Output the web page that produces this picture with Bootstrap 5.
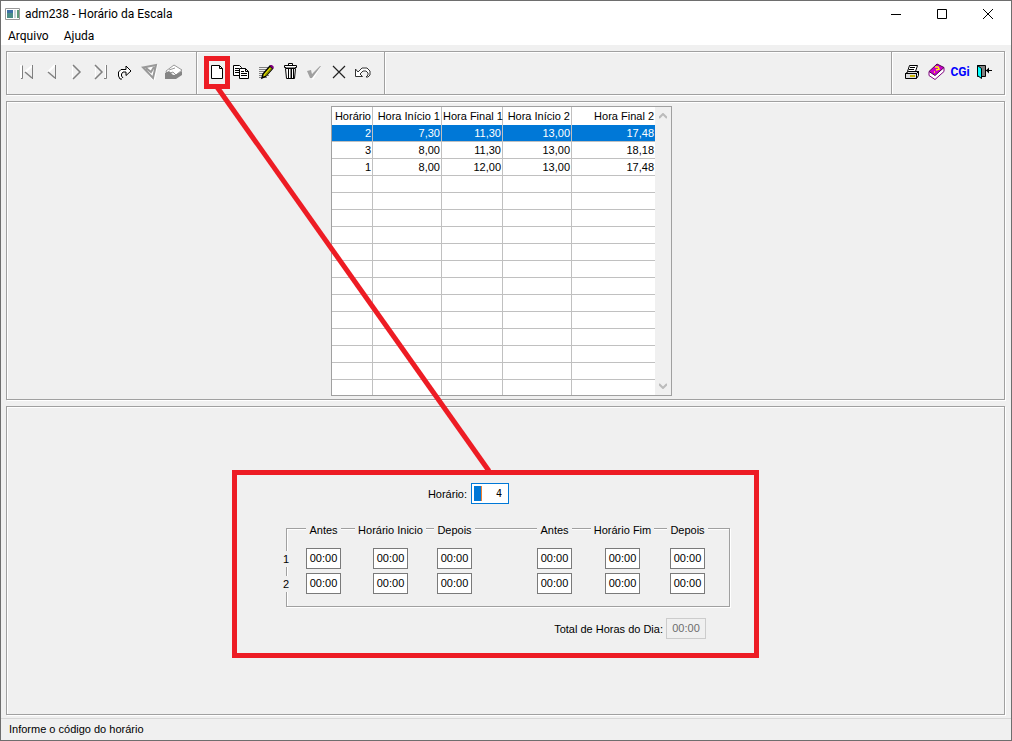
<!DOCTYPE html>
<html lang="pt-BR">
<head>
<meta charset="utf-8">
<meta name="viewport" content="width=device-width, initial-scale=1">
<title>adm238 - Horário da Escala</title>
<link href="https://cdn.jsdelivr.net/npm/bootstrap@5.3.0/dist/css/bootstrap.min.css" rel="stylesheet">
<style>
  :root { --face: #f0f0f0; --edge: #a0a0a0; --blue: #0078d7; --red: #ed1c24; }
  body { font-family: "Liberation Sans", Arial, sans-serif; font-size: 11px; line-height: 16px; color: #000; background: var(--face); }
  .window { border: 1px solid #6e6e6e; }
  .caption, .menus { font-family: Roboto, "Segoe UI", sans-serif; font-size: 12px; background: #fff; }
  .caption { height: 25px; }
  .caption h1 { font-size: 12px; line-height: 24px; font-weight: 400; padding-left: 5px; }
  .caption button { width: 46px; height: 25px; }
  .menus { height: 19px; line-height: 20px; padding-left: 7px; gap: 15px; }
  .menus a { color: #000; text-decoration: none; }
  button { border: 0; background: transparent; padding: 0; color: #000; }
  svg { display: block; }
  main { padding: 0 6px 0 5px; }
  .etched { border: 1px solid var(--edge); box-shadow: inset 1px 1px #fff, 1px 1px #fff; }
  .tools { height: 44px; margin-top: 6px; }
  .tools > div { padding: 0 8px 3px 8px; }
  .tools .wide { width: 190px; padding-right: 10px; }
  .tools .mid { width: 188px; padding-left: 8px; padding-right: 9px; }
  .tools .split { border-right: 1px solid var(--edge); box-shadow: 1px 0 #fff; }
  .tools .split-start { border-left: 1px solid var(--edge); box-shadow: inset 1px 0 #fff; }
  .tools button { width: 24px; height: 24px; display: flex; align-items: center; justify-content: center; }
  .tools .cgi { font: 700 12px/16px Roboto, "Liberation Sans", sans-serif; color: #00f; }
  .call-out { inset: -4px -1px -5px; border: 5px solid var(--red); }
  .browse { margin-top: 6px; padding: 4px 8px 3px 0; }
  .listing { border: 1px solid var(--edge); background: #fff; }
  .listing table { width: 323px; table-layout: fixed; border-collapse: separate; border-spacing: 0; }
  .listing th { font-weight: 400; height: 18px; line-height: 17px; }
  .listing td { height: 17px; line-height: 16px; border-bottom: 1px solid #c0c0c0; }
  .listing tr > * { padding: 0 1px; text-align: right; white-space: nowrap; border-right: 1px solid #c0c0c0; }
  .listing tr > :last-child { border-right: 0; }
  .listing tbody tr:last-child td { height: 15px; border-bottom: 0; }
  .listing .picked td { background: var(--blue); color: #fff; }
  .col-code { width: 41px; }
  .col-start { width: 69px; }
  .col-end { width: 61px; }
  .track { width: 16px; background: var(--face); padding: 6px 0; }
  .editor { margin-top: 6px; padding: 63px 20px 0 0; }
  .framed { width: 527px; border: 5px solid var(--red); padding: 8px 22px 14px 49px; }
  .framed input { height: 21px; border: 1px solid #7a7a7a; background: #fff; padding: 0 0 1px; text-align: center; border-radius: 0; color: #000; outline: 0; }
  .framed .code { width: 38px; border-color: var(--blue); padding-right: 6px; text-align: right; font-family: "DejaVu Sans Mono", monospace; font-size: 10px;
    background: linear-gradient(90deg, var(--blue) 7px, #f08030 7px) 2px 2px / 8px 15px no-repeat #fff; }
  .lead-field { padding-right: 223px; }
  .hours { margin-top: 24px; height: 79px; width: 444px; }
  .hours .cells { display: grid; grid-template-columns: 8px 67px 67px 61px 36px 67px 69px 61px; grid-template-rows: 28px 21px 21px; row-gap: 4px; margin: -13px 0 0 -5px; justify-items: center; align-items: center; }
  .cells span, .cells label { background: var(--face); padding: 0 3px; white-space: nowrap; }
  .cells .no { padding: 0; }
  .cells input { width: 35px; }
  .total { margin-top: 11px; padding-right: 26px; }
  .total label { padding-right: 3px; }
  .framed .total input { width: 40px; border-color: #ccc; background: var(--face); color: #6d6d6d; }
  .status { margin-top: 3px; border-top: 1px solid #d7d7d7; height: 22px; padding: 2px 8px; }
  .pointer { pointer-events: none; z-index: 5; }
</style>
</head>
<body>
<div class="window position-relative d-flex flex-column min-vh-100">
  <header class="caption d-flex align-items-center">
    <svg class="ms-1" width="15" height="12" viewBox="0 0 15 12"><path fill="#fff" stroke="#999" d="M.5.5h14v11H.5z"/><path fill="#4a8c86" d="M2 2h6v8H2z"/><path fill="#3d6fa5" d="M2 2h6v3H2z"/><path fill="#c8d4d8" d="M9 2h2v8H9z"/><path fill="#5d9a78" d="M12 2h2v8h-2z"/></svg>
    <h1 class="mb-0 me-auto">adm238 - Horário da Escala</h1>
    <button type="button" aria-label="Minimizar"><svg class="mx-auto" width="12" height="12"><path stroke="#000" d="M1 6.500h10"/></svg></button>
    <button type="button" aria-label="Maximizar"><svg class="mx-auto" width="12" height="12"><path fill="none" stroke="#000" d="M1.500 1.500h9v9h-9z"/></svg></button>
    <button type="button" aria-label="Fechar"><svg class="mx-auto" width="12" height="12"><path stroke="#000" d="M1 1l10 10M11 1L1 11"/></svg></button>
  </header>
  <nav class="menus d-flex"><a href="#">Arquivo</a><a href="#">Ajuda</a></nav>

  <main class="d-flex flex-column flex-grow-1">
    <div class="tools etched d-flex">
      <div class="wide split d-flex align-items-center justify-content-between">
        <button type="button" aria-label="Primeiro"><svg width="16" height="16" fill="none"><path stroke="#fff" stroke-width="2" d="M2 1v13M13 2L6 8"/><path stroke="#808080" d="M2 14.500h1.500v-13M13.500 1v14"/><path stroke="#808080" stroke-width="1.500" d="M13 14L6 8"/></svg></button>
        <button type="button" aria-label="Anterior"><svg width="16" height="16" fill="none"><path stroke="#fff" stroke-width="2" d="M11 1L4 8"/><path stroke="#808080" d="M11.500 1v14"/><path stroke="#808080" stroke-width="1.500" d="M11 14L4 8"/></svg></button>
        <button type="button" aria-label="Próximo"><svg width="16" height="16" fill="none"><path stroke="#fff" d="M4.500 15V1M5 15l7-7"/><path stroke="#808080" d="M5 1l7 7-7 7" stroke-width="1.500"/></svg></button>
        <button type="button" aria-label="Último"><svg width="16" height="16" fill="none"><path stroke="#fff" d="M2.500 15V1M12.500 1v13"/><path stroke="#808080" d="M2 1l7 7-7 7" stroke-width="1.500"/><path stroke="#808080" d="M13.500 1v13.500H11"/></svg></button>
        <button type="button" aria-label="Ir para"><svg width="16" height="16"><path fill="#fff" stroke="#000" d="M5 15H3L1.500 12V8L4 5.500h5V2l5 5-5 4.500V8H6L4.500 10v2L6 14"/></svg></button>
        <button type="button" aria-label="Filtrar"><svg width="18" height="18"><path fill="#fff" d="M2 5L17 1l-3 16h-3z"/><path fill="none" stroke="#999" stroke-width="2" d="M2 4.500L15 2l-3 13zM5 5l5 4 3-5"/></svg></button>
        <button type="button" aria-label="Catálogo"><svg width="18" height="18"><path fill="#fff" stroke="#999" d="M1 8l8-6 8 5-6 5-3-3-6 2z"/><path fill="#858585" d="M0 10l4-2 4 4h2l7-4v4l-6 4H0z"/><path stroke="#999" d="M4 7l6-2"/></svg></button>
      </div>
      <div class="mid split d-flex align-items-center justify-content-between">
        <button class="position-relative" type="button" aria-label="Novo"><svg width="16" height="16"><path fill="#fff" stroke="#000" d="M2.500 1.500h8l3 3v10h-11zM10.500 1.500v3h3"/></svg><i class="call-out position-absolute"></i></button>
        <button type="button" aria-label="Copiar"><svg width="16" height="16" fill="#fff" stroke="#000"><path d="M.5 1.500h6l2 2v8h-8zM2 4.500h4M2 6.500h5M2 8.500h5"/><path d="M6.500 4.500h6l3 3v7h-9zM12.500 4.500v3h3M8 7.500h3M8 9.500h6M8 11.500h6"/></svg></button>
        <button type="button" aria-label="Editar"><svg width="16" height="16"><path stroke="#808080" d="M1 3.500h9M1 5.500h8M1 7.500h6M1 9.500h5M1 11.500h10M1 13.500h8"/><path fill="#dd0" stroke="#000" stroke-width="1.500" d="M4 14l1-4 7-8 2.500 2.500-7 8z"/><path fill="#800080" d="M12 1h2l2 2-1 2-3-3z"/><path fill="#808000" d="M7 11l6-7 1 1-6 7z"/></svg></button>
        <button type="button" aria-label="Excluir"><svg width="16" height="17"><path fill="#fff" stroke="#000" d="M6.500 2.500v-2h4v2M2.500 2.500h12v2h-12zM3.500 5.500l1 10h8l1-10z"/><path stroke="#000" d="M6.500 6v9M9.500 6v9M11.500 6v9"/><path stroke="#888" d="M8.500 6v9M4 4.500h9"/></svg></button>
        <button type="button" aria-label="Confirmar"><svg width="16" height="16"><path fill="#fff" d="M2 8l3-1 2 3 8-8-1 2-7 12z"/><path fill="#a0a0a0" d="M1 7l4-1 1 4 8-8h1L6 14H4z"/></svg></button>
        <button type="button" aria-label="Cancelar"><svg width="16" height="16"><path stroke="#222" d="M2 2l12 12M14 2L2 14" stroke-width="1.200"/></svg></button>
        <button type="button" aria-label="Desfazer"><svg width="17" height="16" fill="none"><path fill="#fff" stroke="#333" d="M1.500 5v7.500h7L6 10l3-3h3l2 2v2l-2 2h2l2-2V7l-3-3H8L4 8z"/></svg></button>
      </div>
      <div class="split-start d-flex align-items-center ms-auto">
        <button type="button" aria-label="Imprimir"><svg width="16" height="16"><path fill="#fff" stroke="#000" d="M5.500 1.500h8l-2 6h-8z"/><path stroke="#000" d="M6 3.500h5M5 5.500h5"/><path fill="#ddd" stroke="#000" d="M1.500 9.500l3-2h10l-2 2zM1.500 9.500h11v5h-11zM12.500 9.500l2-2v4l-2 3"/><path stroke="#c8b400" stroke-width="2" d="M6 12h5"/></svg></button>
        <button type="button" aria-label="Manual"><svg width="17" height="17"><path fill="#fff" stroke="#800080" d="M1 8.500v4l6 4 9-8v-4"/><path fill="#c0c" stroke="#505" d="M1 8.500L9 1l7 3.500-9 8z"/><path fill="none" stroke="#ff0" stroke-width="1.500" d="M7 4l3 0 1 2-3 1M6 9h1"/></svg></button>
        <button class="cgi" type="button">CGi</button>
        <button type="button" aria-label="Sair"><svg width="16" height="16"><path fill="#808080" stroke="#000" d="M1.500 1.500h8v11h-8z"/><path fill="#0ff" stroke="#000" d="M1.500 1.500l4 3v10l-4-3z"/><path stroke="#000" d="M10 6.500h6"/><path d="M10 6.500l3-3v6z"/></svg></button>
      </div>
    </div>

    <section class="browse etched d-flex justify-content-center">
      <div class="listing d-flex">
        <table>
          <colgroup><col class="col-code"><col class="col-start"><col class="col-end"><col class="col-start"><col></colgroup>
          <thead><tr><th>Horário</th><th>Hora Início 1</th><th>Hora Final 1</th><th>Hora Início 2</th><th>Hora Final 2</th></tr></thead>
          <tbody>
            <tr class="picked"><td>2</td><td>7,30</td><td>11,30</td><td>13,00</td><td>17,48</td></tr>
            <tr><td>3</td><td>8,00</td><td>11,30</td><td>13,00</td><td>18,18</td></tr>
            <tr><td>1</td><td>8,00</td><td>12,00</td><td>13,00</td><td>17,48</td></tr>
            <tr><td></td><td></td><td></td><td></td><td></td></tr>
            <tr><td></td><td></td><td></td><td></td><td></td></tr>
            <tr><td></td><td></td><td></td><td></td><td></td></tr>
            <tr><td></td><td></td><td></td><td></td><td></td></tr>
            <tr><td></td><td></td><td></td><td></td><td></td></tr>
            <tr><td></td><td></td><td></td><td></td><td></td></tr>
            <tr><td></td><td></td><td></td><td></td><td></td></tr>
            <tr><td></td><td></td><td></td><td></td><td></td></tr>
            <tr><td></td><td></td><td></td><td></td><td></td></tr>
            <tr><td></td><td></td><td></td><td></td><td></td></tr>
            <tr><td></td><td></td><td></td><td></td><td></td></tr>
            <tr><td></td><td></td><td></td><td></td><td></td></tr>
            <tr><td></td><td></td><td></td><td></td><td></td></tr>
          </tbody>
        </table>
        <div class="track d-flex flex-column justify-content-between align-items-center">
          <svg width="8" height="6" fill="none"><path stroke="#bbb" stroke-width="2" d="M0 5l4-4 4 4"/></svg>
          <svg width="8" height="6" fill="none"><path stroke="#bbb" stroke-width="2" d="M0 1l4 4 4-4"/></svg>
        </div>
      </div>
    </section>

    <section class="editor etched flex-grow-1 d-flex justify-content-center align-items-start">
      <form class="framed">
        <div class="lead-field d-flex justify-content-end align-items-center">
          <label class="me-1" for="codigo">Horário:</label><input class="code" id="codigo" type="text" value="4">
        </div>
        <div class="hours etched">
          <div class="cells">
            <b></b><span>Antes</span><span>Horário Inicio</span><span>Depois</span><b></b><span>Antes</span><span>Horário Fim</span><span>Depois</span>
            <label class="no" for="a1">1</label><input id="a1" value="00:00"><input aria-label="Início 1" value="00:00"><input aria-label="Depois 1" value="00:00"><b></b><input aria-label="Antes do fim 1" value="00:00"><input aria-label="Fim 1" value="00:00"><input aria-label="Depois do fim 1" value="00:00">
            <label class="no" for="a2">2</label><input id="a2" value="00:00"><input aria-label="Início 2" value="00:00"><input aria-label="Depois 2" value="00:00"><b></b><input aria-label="Antes do fim 2" value="00:00"><input aria-label="Fim 2" value="00:00"><input aria-label="Depois do fim 2" value="00:00">
          </div>
        </div>
        <div class="total d-flex justify-content-end align-items-center">
          <label for="total">Total de Horas do Dia:</label><input id="total" value="00:00" disabled>
        </div>
      </form>
    </section>
  </main>
  <footer class="status">Informe o código do horário</footer>
  <svg class="pointer position-absolute top-0 start-0" width="520" height="480"><path stroke="#ed1c24" stroke-width="5" d="M216 86L488 470"/></svg>
</div>
<script src="https://cdn.jsdelivr.net/npm/bootstrap@5.3.0/dist/js/bootstrap.bundle.min.js"></script>
</body>
</html>
